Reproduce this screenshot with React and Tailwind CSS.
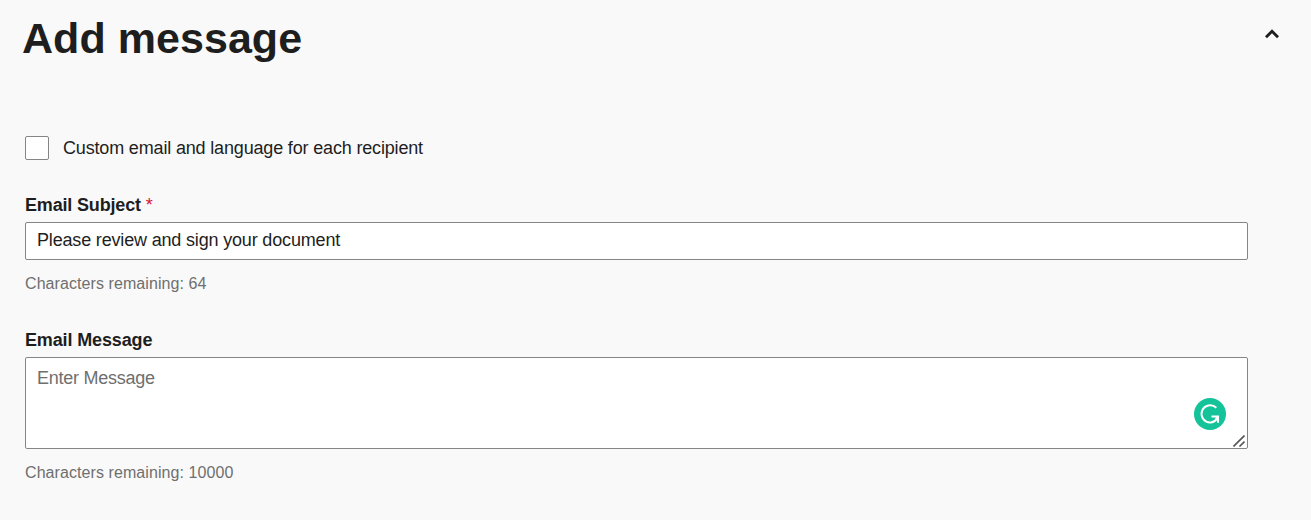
// Add message panel: subject + message fields for the signing email.

const SUBJECT_MAX = 100
const MESSAGE_MAX = 10000
const SUBJECT = 'Please review and sign your document'

function ChevronUp() {
  return (
    <svg width="14" height="10" viewBox="0 0 14 10" fill="none" stroke="#1e1e1e" strokeWidth="2.8">
      <path d="M1 8.2 7 2.2l6 6" />
    </svg>
  )
}

function AssistantBadge() {
  return (
    <svg width="32" height="32" viewBox="0 0 32 32" fill="none">
      <circle cx="16" cy="16" r="16" fill="#15c39a" />
      <path d="M22.3 9.8A8.6 8.6 0 1 0 17 24.4c2.6-.4 4.600-1.500 6-4" stroke="#fff" strokeWidth="2" />
      <path d="M17.500 17.500H25v7.200h-1.900v-2.600l-2.200-.5 1-2.200h-4.400z" fill="#fff" />
    </svg>
  )
}

function ResizeGrip() {
  return (
    <svg width="12" height="12" viewBox="0 0 12 12" stroke="#555" strokeWidth="1.6">
      <path d="M0.5 11.500 11.500 0.500M6.500 11.500l5-5" />
    </svg>
  )
}

function Remaining({ count }) {
  return (
    <p className="mt-[14px] h-5 text-base leading-5 tracking-[0.08px] text-[#6f6f6f]">
      <span>Characters remaining: {count}</span>
    </p>
  )
}

export default function App() {
  return (
    <div className="h-[520px] bg-[#f9f9f9] pl-[25px] font-['Liberation_Sans',Arial,sans-serif] text-[#1e1e1e]">
      {/* Header */}
      <header className="flex h-[136px] items-start justify-between pr-[32px]">
        <h1 className="-ml-[3px] mt-[14px] text-[43px] font-bold leading-[48px] tracking-[0.05px]">Add message</h1>
        <button type="button" aria-label="Collapse" className="mt-[29px]">
          <ChevronUp />
        </button>
      </header>

      <label className="flex h-6 items-center gap-[14px]">
        <input type="checkbox" className="size-6 appearance-none rounded-[2px] border border-[#858585] bg-white" />
        <span className="text-[18px] leading-6 tracking-[-0.165px]">Custom email and language for each recipient</span>
      </label>

      {/* Subject */}
      <div className="mt-[33px] w-[1223px]">
        <label htmlFor="subject" className="block h-[29px] text-[18px] font-bold leading-6 tracking-[-0.17px]">
          Email Subject <span className="font-normal text-[#d6123a]">*</span>
        </label>
        <input
          id="subject"
          defaultValue={SUBJECT}
          className="block h-[38px] w-full rounded-[2px] border border-[#858585] bg-white px-[11px] pb-[2px] text-[18px] tracking-[-0.17px]"
        />
        <Remaining count={SUBJECT_MAX - SUBJECT.length} />
      </div>

      {/* Message */}
      <div className="mt-[34px] w-[1223px]">
        <label htmlFor="message" className="block h-[29px] text-[18px] font-bold leading-6 tracking-[-0.14px]">
          Email Message
        </label>
        <div className="relative">
          <textarea
            id="message"
            placeholder="Enter Message"
            className="block h-[92px] w-full resize-none rounded-[2px] border border-[#858585] bg-white px-[11px] py-2 text-[18px] leading-6 tracking-[-0.25px] placeholder:text-[#6f6f6f]"
          />
          <span className="absolute right-[22px] top-[41px]"><AssistantBadge /></span>
          <span className="absolute bottom-[2px] right-[3px]"><ResizeGrip /></span>
        </div>
        <Remaining count={MESSAGE_MAX} />
      </div>
    </div>
  )
}
